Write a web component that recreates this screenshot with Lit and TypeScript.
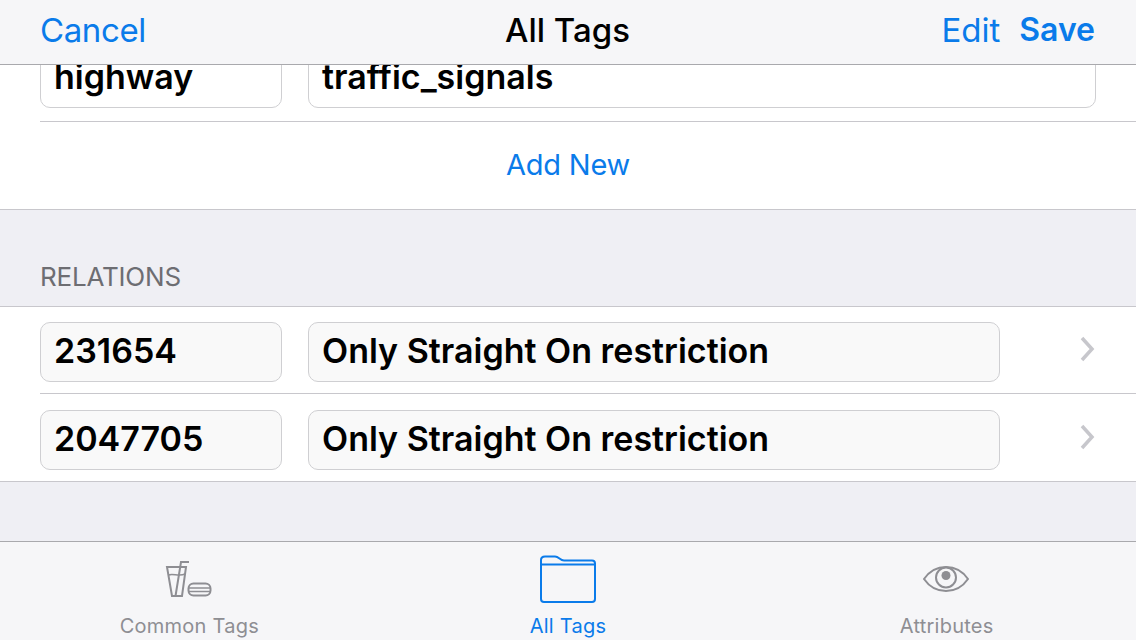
import { LitElement, html, css } from "lit";
import { customElement } from "lit/decorators.js";

@customElement("app-root")
export class AppRoot extends LitElement {
  static styles = css`
    :host {
      display: block;
      width: 1136px;
      height: 640px;
      overflow: hidden;
      font-family: Inter, "Liberation Sans", sans-serif;
      background: #efeff4;
    }
    .screen { display: flex; flex-direction: column; height: 640px; }
    .nav {
      position: relative;
      z-index: 2;
      flex: none;
      height: 60px;
      box-sizing: content-box;
      border-bottom: 1px solid #a9a9ad;
      background: #f6f6f8;
      display: grid;
      grid-template-columns: 1fr auto 1fr;
      align-items: center;
      padding: 0 41px 4px 40px;
      font-size: 33px;
    }
    .cancel, .edit, .save { color: #0a7bea; }
    .cancel { letter-spacing: -0.4px; }
    .title { color: #000; font-weight: 500; }
    .right { display: flex; justify-content: flex-end; gap: 19px; }
    .save { font-weight: 600; font-size: 32px; }
    .content { flex: 1; min-height: 0; overflow: hidden; }
    .group { background: #fff; }
    .tags { margin-top: -17px; border-bottom: 1px solid #c8c7cc; }
    .row { display: flex; align-items: center; margin-left: 40px; }
    .row.first { padding: 0 40px 13px 0; border-bottom: 1px solid #c8c7cc; }
    .field {
      box-sizing: border-box;
      height: 60px;
      border: 1px solid #cfcfd2;
      border-radius: 10px;
      padding: 0 14px 3px 13px;
      display: flex;
      align-items: center;
      font-size: 34px;
      line-height: 40px;
      font-weight: 600;
      color: #000;
      white-space: nowrap;
    }
    .key { width: 242px; flex: none; margin-right: 26px; }
    .wide { flex: 1; }
    .add {
      height: 85px;
      padding-bottom: 2px;
      display: flex;
      align-items: center;
      justify-content: center;
      color: #0a7bea;
      font-size: 29px;
      letter-spacing: -0.2px;
    }
    .header {
      height: 96px;
      box-sizing: border-box;
      padding: 0 40px 14px;
      display: flex;
      align-items: flex-end;
      font-size: 26px;
      letter-spacing: -0.2px;
      color: #6d6d72;
    }
    .relations { border-top: 1px solid #c8c7cc; border-bottom: 1px solid #c8c7cc; }
    .rel { padding: 15px 0 11px; }
    .rel + .rel { padding-top: 16px; border-top: 1px solid #c8c7cc; }
    .rel .field { background: #f9f9f9; }
    .rel .wide { flex: none; width: 692px; }
    .chev { margin: -6px 0 0 78px; width: 22px; height: 30px; flex: none; }
    .tabs {
      flex: none;
      height: 98px;
      border-top: 1px solid #a9a9ad;
      background: #f6f6f8;
      display: grid;
      grid-template-columns: repeat(3, 1fr);
    }
    .tab {
      display: flex;
      flex-direction: column;
      align-items: center;
      color: #8e8e93;
      font-size: 20px;
      letter-spacing: 0.25px;
    }
    .tab.on { color: #0a7bea; }
    .ic { height: 60px; margin-top: 12px; display: block; }
    .tab span { line-height: 24px; }
  `;

  render() {
    return html`
      <div class="screen">
        <div class="nav">
          <div class="cancel">Cancel</div>
          <div class="title">All Tags</div>
          <div class="right"><span class="edit">Edit</span><span class="save">Save</span></div>
        </div>
        <div class="content">
          <div class="group tags">
            <div class="row first">
              <div class="field key">highway</div>
              <div class="field wide">traffic_signals</div>
            </div>
            <div class="add">Add New</div>
          </div>
          <div class="header">RELATIONS</div>
          <div class="group relations">
            ${["231654", "2047705"].map(
              (id) => html`
                <div class="row rel">
                  <div class="field key">${id}</div>
                  <div class="field wide">Only Straight On restriction</div>
                  <svg class="chev" viewBox="0 0 22 30" fill="none" stroke="#c7c7cc" stroke-width="3.5">
                    <path d="M4 4 L14 15 L4 26" />
                  </svg>
                </div>
              `
            )}
          </div>
        </div>
        <div class="tabs">
          <div class="tab">
            <svg class="ic" width="60" height="60" viewBox="0 0 60 60" fill="none" stroke="#8e8e93" stroke-width="2">
              <path d="M8 13H27L23 42H13Z" />
              <path d="M9.500 21C14 19 20 23 26 20" stroke-width="1.500" />
              <path d="M16.500 42L22 8H30" />
              <rect x="29.500" y="29.500" width="22" height="12" rx="5" />
              <path d="M29.500 34H51.500M29.500 37.500H51.500" stroke-width="1.500" />
            </svg>
            <span>Common Tags</span>
          </div>
          <div class="tab on">
            <svg class="ic" width="60" height="60" viewBox="0 0 60 60" fill="none" stroke="#0a7bea" stroke-width="2">
              <path d="M3 6C3 3.500 4.500 2.500 7 2.500H17C21 2.500 22 6.500 26 6.500H54C56 6.500 57 7.500 57 9.500V45C57 47 56 48 54 48H6C4 48 3 47 3 45Z" />
              <path d="M3 10.500H57" />
            </svg>
            <span>All Tags</span>
          </div>
          <div class="tab">
            <svg class="ic" width="60" height="60" viewBox="0 0 60 60" fill="none" stroke="#8e8e93" stroke-width="2">
              <path d="M7 25C18 9 40 9 51 25C40 41 18 41 7 25Z" />
              <circle cx="29" cy="23.500" r="10" />
              <circle cx="29" cy="21.500" r="4.500" fill="#8e8e93" stroke="none" />
            </svg>
            <span>Attributes</span>
          </div>
        </div>
      </div>
    `;
  }
}
